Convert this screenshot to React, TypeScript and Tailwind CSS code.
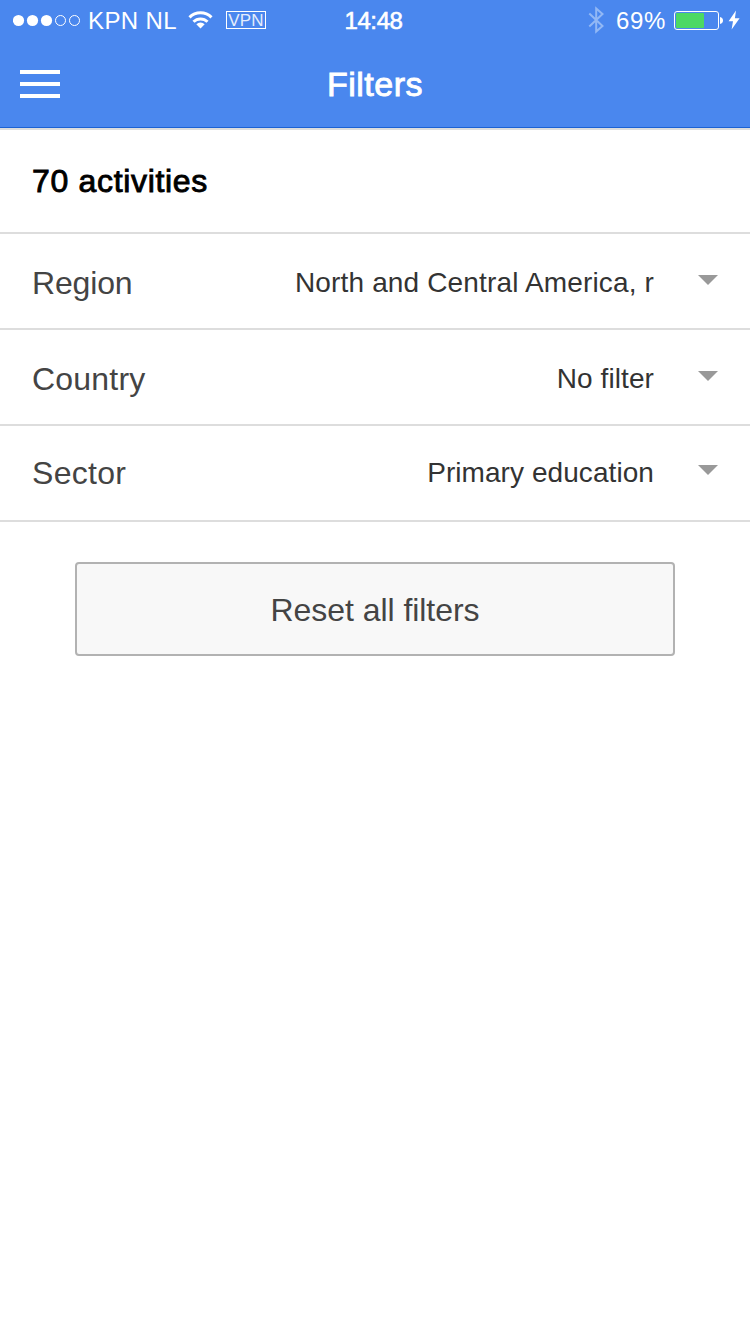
type Filter = { label: string; value: string; pad: string; labelClass: string; valueClass: string };

const filters: Filter[] = [
  { label: "Region", value: "North and Central America, r", pad: "pt-1", labelClass: "tracking-[-0.15px]", valueClass: "tracking-[0.15px]" },
  { label: "Country", value: "No filter", pad: "pt-1", labelClass: "tracking-[0.2px]", valueClass: "tracking-[0.1px]" },
  { label: "Sector", value: "Primary education", pad: "pt-0", labelClass: "tracking-[0.3px]", valueClass: "tracking-[0.07px]" },
];

function SignalDots() {
  return (
    <svg width="68" height="13" viewBox="0 0 68 13" className="ml-[13px] mt-px shrink-0">
      {[5.5, 19.5, 33.5].map((x) => (
        <circle key={x} cx={x} cy="6.5" r="5.6" fill="white" />
      ))}
      {[47.5, 61.5].map((x) => (
        <circle key={x} cx={x} cy="6.5" r="5" fill="none" stroke="white" strokeWidth="1" />
      ))}
    </svg>
  );
}

function WifiIcon() {
  return (
    <svg width="25" height="18" viewBox="0 0 25 18" className="block shrink-0">
      <g fill="none" stroke="white" strokeWidth="3">
        <path d="M1.5 6.4a15.56 15.56 0 0 1 22 0" />
        <path d="M5.5 10.800a9.9 9.9 0 0 1 14 0" />
      </g>
      <path d="M8.300 13.300a5.940 5.940 0 0 1 8.400 0L12.500 17.600Z" fill="white" />
    </svg>
  );
}

function BluetoothIcon() {
  return (
    <svg width="17" height="28" viewBox="0 0 17 28" className="shrink-0">
      <path d="M1.3 7.6 14.5 20 8.2 25.6V2.4L14.5 8 1.3 20.4" fill="none" stroke="#92b8f5" strokeWidth="2" />
    </svg>
  );
}

function BatteryIcon() {
  return (
    <svg width="50" height="20" viewBox="0 0 50 20" className="block shrink-0">
      <rect x="0.5" y="0.5" width="44" height="18" rx="2.5" fill="none" stroke="white" />
      <rect x="2" y="2" width="28" height="15" rx="0.8" fill="#4cd964" />
      <path d="M46 6c2 .3 3 1.8 3 3.5s-1 3.200-3 3.500Z" fill="white" />
    </svg>
  );
}

function BoltIcon() {
  return (
    <svg width="12" height="20" viewBox="0 0 12 20" className="block shrink-0">
      <path d="M8 .5.6 11.300H5L3.600 19.500 11.600 8.200H6.900Z" fill="white" />
    </svg>
  );
}

function StatusBar() {
  return (
    <div className="grid h-10 grid-cols-[1fr_auto_1fr] items-center text-2xl leading-6">
      <div className="flex items-center">
        <SignalDots />
        <span className="ml-[7px] mt-px w-[90px] whitespace-nowrap tracking-[0.4px]">KPN NL</span>
        <span className="ml-[10px]"><WifiIcon /></span>
        <span className="ml-[13px] flex h-[18px] w-10 items-center justify-center border border-white text-[17px] leading-none tracking-[0.2px]">
          <span className="opacity-85">VPN</span>
        </span>
      </div>
      <span className="mr-[3px] mt-px tracking-[-0.4px] [-webkit-text-stroke:0.6px_white]">14:48</span>
      <div className="flex items-center justify-end pr-[10px]">
        <BluetoothIcon />
        <span className="ml-[11px] mt-px w-[50px] whitespace-nowrap tracking-[0.6px]">69%</span>
        <span className="ml-[8px] mt-[2px]"><BatteryIcon /></span>
        <span className="ml-[4px]"><BoltIcon /></span>
      </div>
    </div>
  );
}

export default function App() {
  return (
    <div className="flex min-h-[1334px] w-[750px] flex-col bg-white font-['Liberation_Sans',Arial,sans-serif]">
      <header className="flex h-32 flex-col border-b border-[#1c62d3] bg-[#4a87ee] text-white">
        <StatusBar />
        <div className="grid h-[87px] grid-cols-[1fr_auto_1fr] items-center">
          <button aria-label="Menu" className="ml-5 flex w-10 flex-col gap-2">
            <span className="h-1 bg-white" />
            <span className="h-1 bg-white" />
            <span className="h-1 bg-white" />
          </button>
          <h1 className="mt-px text-[34px] leading-none tracking-[0.5px] [-webkit-text-stroke:0.9px_white]">Filters</h1>
        </div>
      </header>
      <main>
        <div className="flex h-[106px] items-center border-y-2 border-[#dddddd] px-8 text-[32px] leading-none tracking-[0.68px] text-black [-webkit-text-stroke:0.9px_black]">
          70 activities
        </div>
        {filters.map((f) => (
          <div key={f.label} className={`flex h-24 items-center border-b-2 border-[#dddddd] pl-8 pr-8 leading-none ${f.pad}`}>
            <span className={`text-[32px] text-[#444444] ${f.labelClass}`}>{f.label}</span>
            <span className={`ml-auto whitespace-nowrap text-[28px] text-[#333333] ${f.valueClass}`}>{f.value}</span>
            <svg width="20" height="10" viewBox="0 0 20 10" className="mb-1.5 ml-11 shrink-0">
              <path d="M0 0h20L10 10Z" fill="#999999" />
            </svg>
          </div>
        ))}
        <button className="mx-auto mt-10 flex h-[94px] w-[600px] items-center justify-center rounded border-2 border-[#b2b2b2] bg-[#f8f8f8] pt-0.5 text-[32px] leading-none tracking-[-0.05px] text-[#444444]">
          Reset all filters
        </button>
      </main>
    </div>
  );
}
